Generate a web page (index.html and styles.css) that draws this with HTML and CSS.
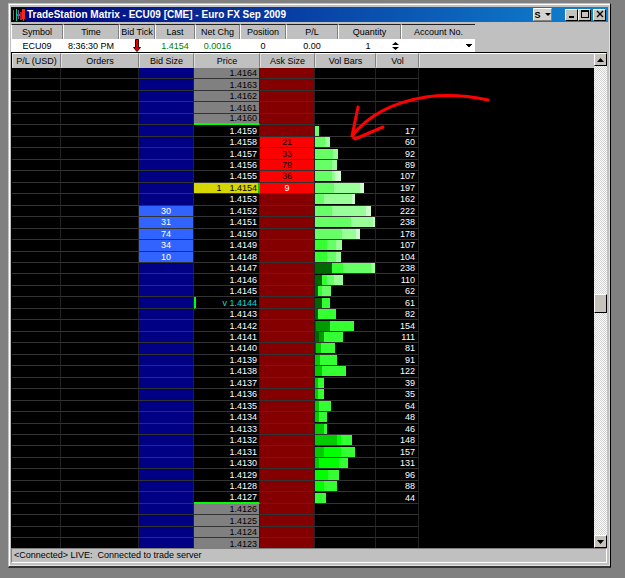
FILE: index.html
```html
<!DOCTYPE html>
<html lang="en">
<head>
<meta charset="utf-8">
<title>TradeStation Matrix</title>
<link rel="stylesheet" href="styles.css">
</head>
<body>
<main class="window">
  <header class="titlebar">
    <svg class="app-icon" viewBox="0 0 14 14" aria-hidden="true">
      <rect width="14" height="14" fill="#000"/>
      <path d="M1 2h1v10H1z" fill="#0b2"/>
      <path d="M4 1h1v12H4z" fill="#0c8"/>
      <path d="M5 6h3v2H5zM6 2h1v9H6z" fill="#75a"/>
      <rect x="8" y="4" width="2" height="8" fill="#a22"/>
      <rect x="10" y="1" width="3" height="10" fill="#f22"/>
      <path d="M11 11h1v2h-1z" fill="#f22"/>
    </svg>
    <h1>TradeStation Matrix - ECU09 [CME] - Euro FX Sep 2009</h1>
    <button class="style-button" aria-label="Style">S<svg viewBox="0 0 6 3" aria-hidden="true"><path d="M0 0h6L3 3z"/></svg></button>
    <div class="window-buttons">
      <button aria-label="Minimize"><svg viewBox="0 0 11 9" aria-hidden="true"><path d="M3 6h5v2H3z"/></svg></button>
      <button aria-label="Maximize"><svg viewBox="0 0 11 9" aria-hidden="true"><path d="M2 0h8v8H2zM3 2v5h6V2z" fill-rule="evenodd"/></svg></button>
      <button aria-label="Close"><svg viewBox="0 0 11 9" aria-hidden="true"><path d="M3 1l6 6M9 1L3 7" stroke="#000" stroke-width="1.4"/></svg></button>
    </div>
  </header>

  <table class="summary">
    <colgroup><col class="w52"><col class="w56"><col class="w36"><col class="w40"><col class="w45"><col class="w46"><col class="w52"><col class="w63"><col class="w74"></colgroup>
    <thead>
      <tr><th>Symbol</th><th>Time</th><th>Bid Tick</th><th>Last</th><th>Net Chg</th><th>Position</th><th>P/L</th><th>Quantity</th><th>Account No.</th></tr>
    </thead>
    <tbody>
      <tr>
        <td>ECU09</td>
        <td>8:36:30 PM</td>
        <td><svg class="tick" viewBox="0 0 8 13" role="img" aria-label="Down"><path d="M2.5 .5h3v8h2L4 12.5.5 8.500h2z" fill="#d00" stroke="#300"/></svg></td>
        <td class="up">1.4154</td>
        <td class="up">0.0016</td>
        <td>0</td>
        <td>0.00</td>
        <td><div class="field"><input class="quantity" type="text" value="1" aria-label="Quantity"><button class="plain" aria-label="Change quantity"><svg viewBox="0 0 7 8" aria-hidden="true"><path d="M3.5 0L7 3H0zM0 5h7L3.5 8z"/></svg></button></div></td>
        <td><select class="account" aria-label="Account No."><option></option></select></td>
      </tr>
    </tbody>
  </table>

  <section class="matrix">
    <div class="ladder-pane">
      <table class="ladder">
        <colgroup><col class="w49"><col class="w78"><col class="w55"><col class="w66"><col class="w55"><col class="w61"><col class="w43"><col></colgroup>
        <thead>
          <tr><th>P/L (USD)</th><th>Orders</th><th>Bid Size</th><th>Price</th><th>Ask Size</th><th>Vol Bars</th><th>Vol</th><th class="rest"></th></tr>
        </thead>
        <tbody id="ladder-rows"></tbody>
      </table>
      <svg class="annotation" viewBox="0 0 150 52" aria-hidden="true">
        <path d="M140 13Q107 6 78 10Q28 18 4 49M10 20L4 49L7 52L35 40"/>
      </svg>
    </div>
    <div class="scrollbar">
      <button aria-label="Scroll up"><svg viewBox="0 0 7 4" aria-hidden="true"><path d="M3.5 0L7 4H0z"/></svg></button>
      <div class="track"><div class="before"></div><div class="thumb"></div><div class="after"></div></div>
      <button aria-label="Scroll down"><svg viewBox="0 0 7 4" aria-hidden="true"><path d="M0 0h7L3.5 4z"/></svg></button>
    </div>
  </section>

  <footer class="status">&lt;Connected&gt; LIVE:&nbsp; Connected to trade server</footer>
</main>
<script src="ladder.js"></script>
</body>
</html>
```
FILE: styles.css
```css
* {
  box-sizing: border-box;
}

body {
  margin: 0;
  height: 100vh;
  padding: 3px 14px 10px 8px;
  background: #808080;
  color: #000;
  font: 9px/10px "Liberation Sans", Arial, sans-serif;
}

button,
input,
select {
  margin: 0;
  padding: 0;
  border: 0;
  border-radius: 0;
  color: inherit;
  font: inherit;
}

svg {
  display: block;
}

.window {
  display: flex;
  flex-direction: column;
  height: 100%;
  padding: 2px 2px 3px;
  border: 1px solid #c0c0c0;
  border-right: 1px solid #000;
  border-bottom: 2px solid #333;
  background: #c0c0c0;
  box-shadow: inset 1px 1px #fff, inset -1px -1px #e0e0e0;
}

.titlebar {
  display: flex;
  align-items: center;
  height: 15px;
  margin: 1px 0 2px;
  padding: 0 2px 0 1px;
  background: linear-gradient(to right, #00007b, #1084d0);
  color: #fff;
}

.app-icon {
  width: 14px;
  height: 14px;
}

h1 {
  flex: 1;
  margin: 0 0 0 1px;
  font-size: 10px;
  line-height: 14px;
  white-space: nowrap;
}

.titlebar button,
.scrollbar button,
.thumb {
  display: flex;
  align-items: center;
  justify-content: center;
  border: 1px solid;
  border-color: #fff #000 #000 #fff;
  background: #c6c3bd;
  color: #000;
}

.titlebar .style-button {
  width: 19px;
  height: 13px;
  margin-right: 13px;
  gap: 4px;
  border-color: #fff #808080 #808080 #fff;
  background: #d6d3ce;
  font-weight: bold;
}

.style-button svg {
  width: 6px;
  height: 3px;
}

.window-buttons {
  display: flex;
}

.window-buttons button {
  width: 13px;
  height: 12px;
}

.window-buttons button:last-child {
  margin-left: 2px;
}

.window-buttons svg {
  width: 11px;
  height: 9px;
}

table {
  table-layout: fixed;
  border-collapse: separate;
  border-spacing: 0;
}

th,
td {
  padding: 0;
  white-space: nowrap;
  text-align: center;
  font-weight: normal;
}

th {
  background: #c0c0c0;
}

.w36 { width: 36px; }
.w40 { width: 40px; }
.w43 { width: 43px; }
.w45 { width: 45px; }
.w46 { width: 46px; }
.w49 { width: 49px; }
.w52 { width: 52px; }
.w55 { width: 55px; }
.w56 { width: 56px; }
.w61 { width: 61px; }
.w63 { width: 63px; }
.w66 { width: 66px; }
.w74 { width: 74px; }
.w78 { width: 78px; }

.summary {
  width: 464px;
}

.summary th {
  height: 15px;
  border-top: 1px solid #202020;
  border-right: 1px solid #808080;
  border-left: 1px solid #fff;
}

.summary th:last-child {
  border-right: 0;
}

.summary td {
  height: 13px;
  background: #fff;
}

.summary .up {
  color: #008000;
}

.tick {
  width: 8px;
  height: 13px;
  margin: 0 auto;
}

.field {
  display: flex;
  align-items: center;
  padding-right: 2px;
}

.quantity {
  flex: 1;
  min-width: 0;
  height: 11px;
  padding-left: 6px;
  background: transparent;
  text-align: center;
}

.plain {
  background: transparent;
}

.plain svg {
  width: 7px;
  height: 8px;
}

.account {
  display: block;
  width: 100%;
  height: 12px;
  appearance: none;
  background: linear-gradient(#000, #000) right 3px top 4px / 6px 1px no-repeat,
    linear-gradient(#000, #000) right 4px top 5px / 4px 1px no-repeat,
    linear-gradient(#000, #000) right 5px top 6px / 2px 1px no-repeat;
}

.matrix {
  display: flex;
  flex: 1;
  min-height: 0;
  margin-right: 1px;
  border-top: 1px solid #000;
  border-left: 1px solid #000;
}

.ladder-pane {
  position: relative;
  flex: 1;
  overflow: hidden;
  background: #000;
}

.ladder {
  width: 100%;
  height: calc(100% + 2px);
}

.ladder th {
  height: 15px;
  border: 1px solid;
  border-color: #fff #808080 #c0c0c0 #e0e0e0;
}

.ladder .rest {
  border-right: 0;
}

.ladder td {
  border-right: 1px solid #222;
  border-bottom: 1px solid #333;
  color: #fff;
}

.ladder td.rest {
  border: 0;
}

.ladder .bid {
  background: #000084;
}

.ladder .bid.active {
  background: #3163ff;
}

.ladder .ask {
  background: #840000;
}

.ladder .ask.active {
  background: #f00;
  color: #000;
}

.ladder .last .ask.active {
  color: #fff;
}

.ladder .price,
.ladder .vol {
  padding-right: 3px;
  text-align: right;
}

.ladder .price {
  padding-right: 2px;
}

.ladder .outside .price {
  background: #808080;
  color: #000;
}

.ladder .before-high .price,
.ladder .low .price {
  border-bottom: 2px solid #0f0;
  line-height: 9px;
}

.ladder .last .price {
  border-right: 2px solid #0c0;
  padding-right: 1px;
  background: #d6d600;
  color: #000;
}

.ladder .open .price {
  border-left: 2px solid #0f0;
  color: #0dd;
}

.last-size {
  margin-right: 8px;
}

.bar {
  display: flex;
  height: 10px;
}

.s1 { background: #006600; }
.s2 { background: #009900; }
.s3 { background: #00cc00; }
.s4 { background: #00ff00; }
.s5 { background: #33ff33; }
.s6 { background: #66ff66; }
.s7 { background: #99ff99; }
.s8 { background: #ccffcc; }

.annotation {
  position: absolute;
  top: 34px;
  left: 336px;
  width: 150px;
  height: 52px;
  overflow: visible;
  fill: none;
  stroke: #f00;
  stroke-width: 3;
  stroke-linecap: round;
  stroke-linejoin: round;
}

.scrollbar {
  display: flex;
  flex-direction: column;
  width: 13px;
}

.scrollbar button {
  width: 13px;
  height: 13px;
}

.scrollbar svg {
  width: 7px;
  height: 4px;
}

.track {
  display: flex;
  flex: 1;
  flex-direction: column;
  background: repeating-conic-gradient(#fff 0 25%, #d0d0d0 0 50%) 0 0 / 2px 2px;
}

.before {
  flex: 227;
}

.thumb {
  height: 19px;
}

.after {
  flex: 221;
}

.status {
  height: 15px;
  margin-right: 1px;
  padding: 1px 2px;
  border: 1px solid;
  border-color: #808080 #fff #fff #808080;
  line-height: 11px;
  white-space: pre;
}
```
FILE: ladder.js
```js
// Each row: [price, volume, bar segments as [shade, width], bid size, ask size]
const rows = [
  [4159, 17, [[6, 4]]],
  [4158, 60, [[6, 10], [7, 5]], "", 21],
  [4157, 92, [[6, 18], [7, 5]], "", 33],
  [4156, 89, [[6, 17], [7, 5]], "", 79],
  [4155, 107, [[6, 17], [7, 3], [8, 6]], "", 36],
  [4154, 197, [[6, 19], [7, 26], [8, 4]], "", 9],
  [4153, 162, [[6, 9], [7, 28], [8, 3]]],
  [4152, 222, [[6, 17], [7, 34], [8, 5]], 30],
  [4151, 238, [[6, 36], [7, 22], [8, 2]], 31],
  [4150, 178, [[6, 27], [7, 14], [8, 4]], 74],
  [4149, 107, [[5, 12], [6, 9], [7, 6]], 34],
  [4148, 104, [[5, 12], [6, 9], [7, 5]], 10],
  [4147, 238, [[1, 17], [5, 11], [6, 28], [7, 4]]],
  [4146, 110, [[1, 7], [5, 5], [6, 7], [7, 9]]],
  [4145, 62, [[1, 3], [5, 4], [6, 9]]],
  [4144, 61, [[1, 7], [5, 8]]],
  [4143, 82, [[1, 3], [5, 18]]],
  [4142, 154, [[1, 1], [2, 14], [5, 24]]],
  [4141, 111, [[1, 4], [2, 5], [5, 19]]],
  [4140, 81, [[1, 1], [3, 5], [5, 14]]],
  [4139, 91, [[3, 5], [5, 17]]],
  [4138, 122, [[3, 7], [5, 24]]],
  [4137, 39, [[3, 3], [5, 6]]],
  [4136, 35, [[3, 3], [5, 6]]],
  [4135, 64, [[3, 4], [5, 12]]],
  [4134, 48, [[3, 4], [5, 8]]],
  [4133, 46, [[3, 9], [5, 3]]],
  [4132, 148, [[3, 22], [4, 4], [5, 11]]],
  [4131, 157, [[3, 9], [4, 17], [5, 14]]],
  [4130, 131, [[3, 4], [4, 20], [5, 9]]],
  [4129, 96, [[4, 13], [5, 11]]],
  [4128, 88, [[4, 9], [5, 13]]],
  [4127, 44, [[5, 11]]]
];

const roles = { 4160: "before-high", 4154: "last", 4144: "open", 4127: "low" };
const prefixes = { 4154: '<span class="last-size">1</span>', 4144: "v " };
const traded = new Map(rows.map((row) => [row[0], row]));
const html = [];

for (let price = 4164; price >= 4123; price--) {
  const [, vol = "", segments = [], bid = "", ask = ""] = traded.get(price) || [];
  const role = `${roles[price] || ""} ${traded.has(price) ? "" : "outside"}`;
  const bar = segments.map(([shade, width]) => `<i class="s${shade}" style="width:${width}px"></i>`).join("");
  html.push(`<tr class="${role}"><td></td><td></td>
    <td class="bid ${bid ? "active" : ""}">${bid}</td>
    <td class="price">${prefixes[price] || ""}1.${price}</td>
    <td class="ask ${ask ? "active" : ""}">${ask}</td>
    <td><div class="bar">${bar}</div></td>
    <td class="vol">${vol}</td><td class="rest"></td></tr>`);
}

document.getElementById("ladder-rows").innerHTML = html.join("");
```
